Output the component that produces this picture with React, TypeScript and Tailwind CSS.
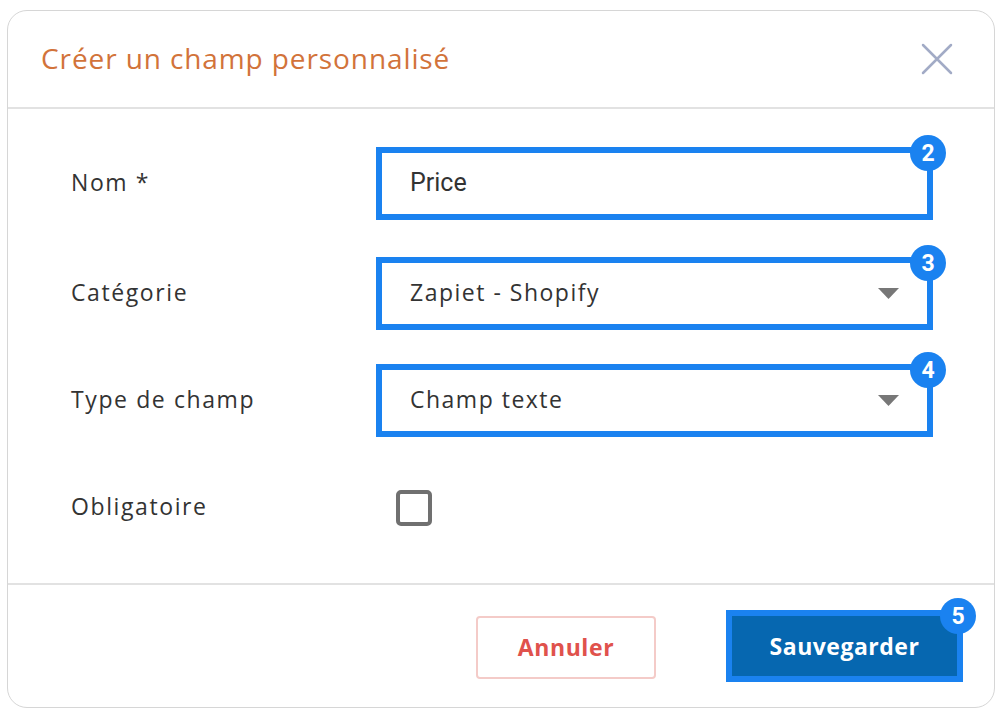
import React from 'react';

const Badge: React.FC<{ n: number }> = ({ n }) => (
  <span className="absolute -top-[18px] -right-[19px] w-[36px] h-[36px] rounded-full bg-[#1a82f0] text-white flex items-center justify-center font-['Roboto'] font-bold text-[23px] tracking-normal leading-none">
    {n}
  </span>
);

const Caret = () => (
  <svg width="21" height="11" viewBox="0 0 21 11" className="shrink-0">
    <polygon points="0,0 21,0 10.5,11" fill="#777777" />
  </svg>
);

const Field: React.FC<{ label: string; n: number; className?: string; children: React.ReactNode }> = ({ label, n, className, children }) => (
  <div className={`flex items-center ${className ?? ''}`}>
    <div className="w-[368px] pl-[63px] text-[23px] tracking-[1.6px] text-[#333333] -mt-[3px]">{label}</div>
    <div className="relative w-[557px] h-[73px] border-[6px] border-[#1a82f0] bg-white flex items-center pl-[28px] pr-[28px]">
      {children}
      <Badge n={n} />
    </div>
  </div>
);

export default function App() {
  return (
    <div className="w-[1001px] h-[717px] bg-white pt-[10px] pl-[7px] font-['Open_Sans',sans-serif]">
      <div className="w-[988px] h-[698px] border border-[#d6d6d6] rounded-[20px] flex flex-col">
        <div className="h-[98px] shrink-0 flex items-center justify-between pl-[33px] pr-[41px] border-b-2 border-[#e2e2e2]">
          <h1 className="text-[28px] text-[#d2733a] tracking-[0.9px] pb-[2px]">Créer un champ personnalisé</h1>
          <svg width="32" height="32" viewBox="0 0 32 32">
            <path d="M2 2 L30 30 M30 2 L2 30" stroke="#a2abc6" strokeWidth="2.5" strokeLinecap="round" />
          </svg>
        </div>

        <div className="flex-1 flex flex-col pt-[38px]">
          <Field label="Nom *" n={2}>
            <span className="font-['Roboto'] text-[25px] text-[#333333] -mt-[2px]">Price</span>
          </Field>
          <Field label="Catégorie" n={3} className="mt-[37px]">
            <span className="flex-1 text-[23px] text-[#333333] tracking-[1.5px] -mt-[2px]">Zapiet - Shopify</span>
            <Caret />
          </Field>
          <Field label="Type de champ" n={4} className="mt-[34px]">
            <span className="flex-1 text-[23px] text-[#333333] tracking-[1.5px] -mt-[2px]">Champ texte</span>
            <Caret />
          </Field>
          <div className="flex items-center mt-[53px]">
            <div className="w-[368px] pl-[63px] text-[23px] tracking-[1.6px] text-[#333333] -mt-[3px]">Obligatoire</div>
            <div className="ml-[20px] w-[36px] h-[36px] border-[4px] border-[#707070] rounded-[5px]" />
          </div>
        </div>

        <div className="h-[124px] shrink-0 border-t-2 border-[#e2e2e2] flex items-center justify-end pr-[31px] gap-[70px]">
          <button className="w-[180px] h-[63px] border-2 border-[#f4cbc8] rounded-[4px] text-[#e0524c] font-bold text-[23px] tracking-[0.6px] mt-[2px]">
            Annuler
          </button>
          <button className="relative w-[237px] h-[72px] border-[6px] border-[#1a82f0] bg-[#0667b0] text-white font-bold text-[23px] tracking-[0.5px]">
            Sauvegarder
            <Badge n={5} />
          </button>
        </div>
      </div>
    </div>
  );
}
